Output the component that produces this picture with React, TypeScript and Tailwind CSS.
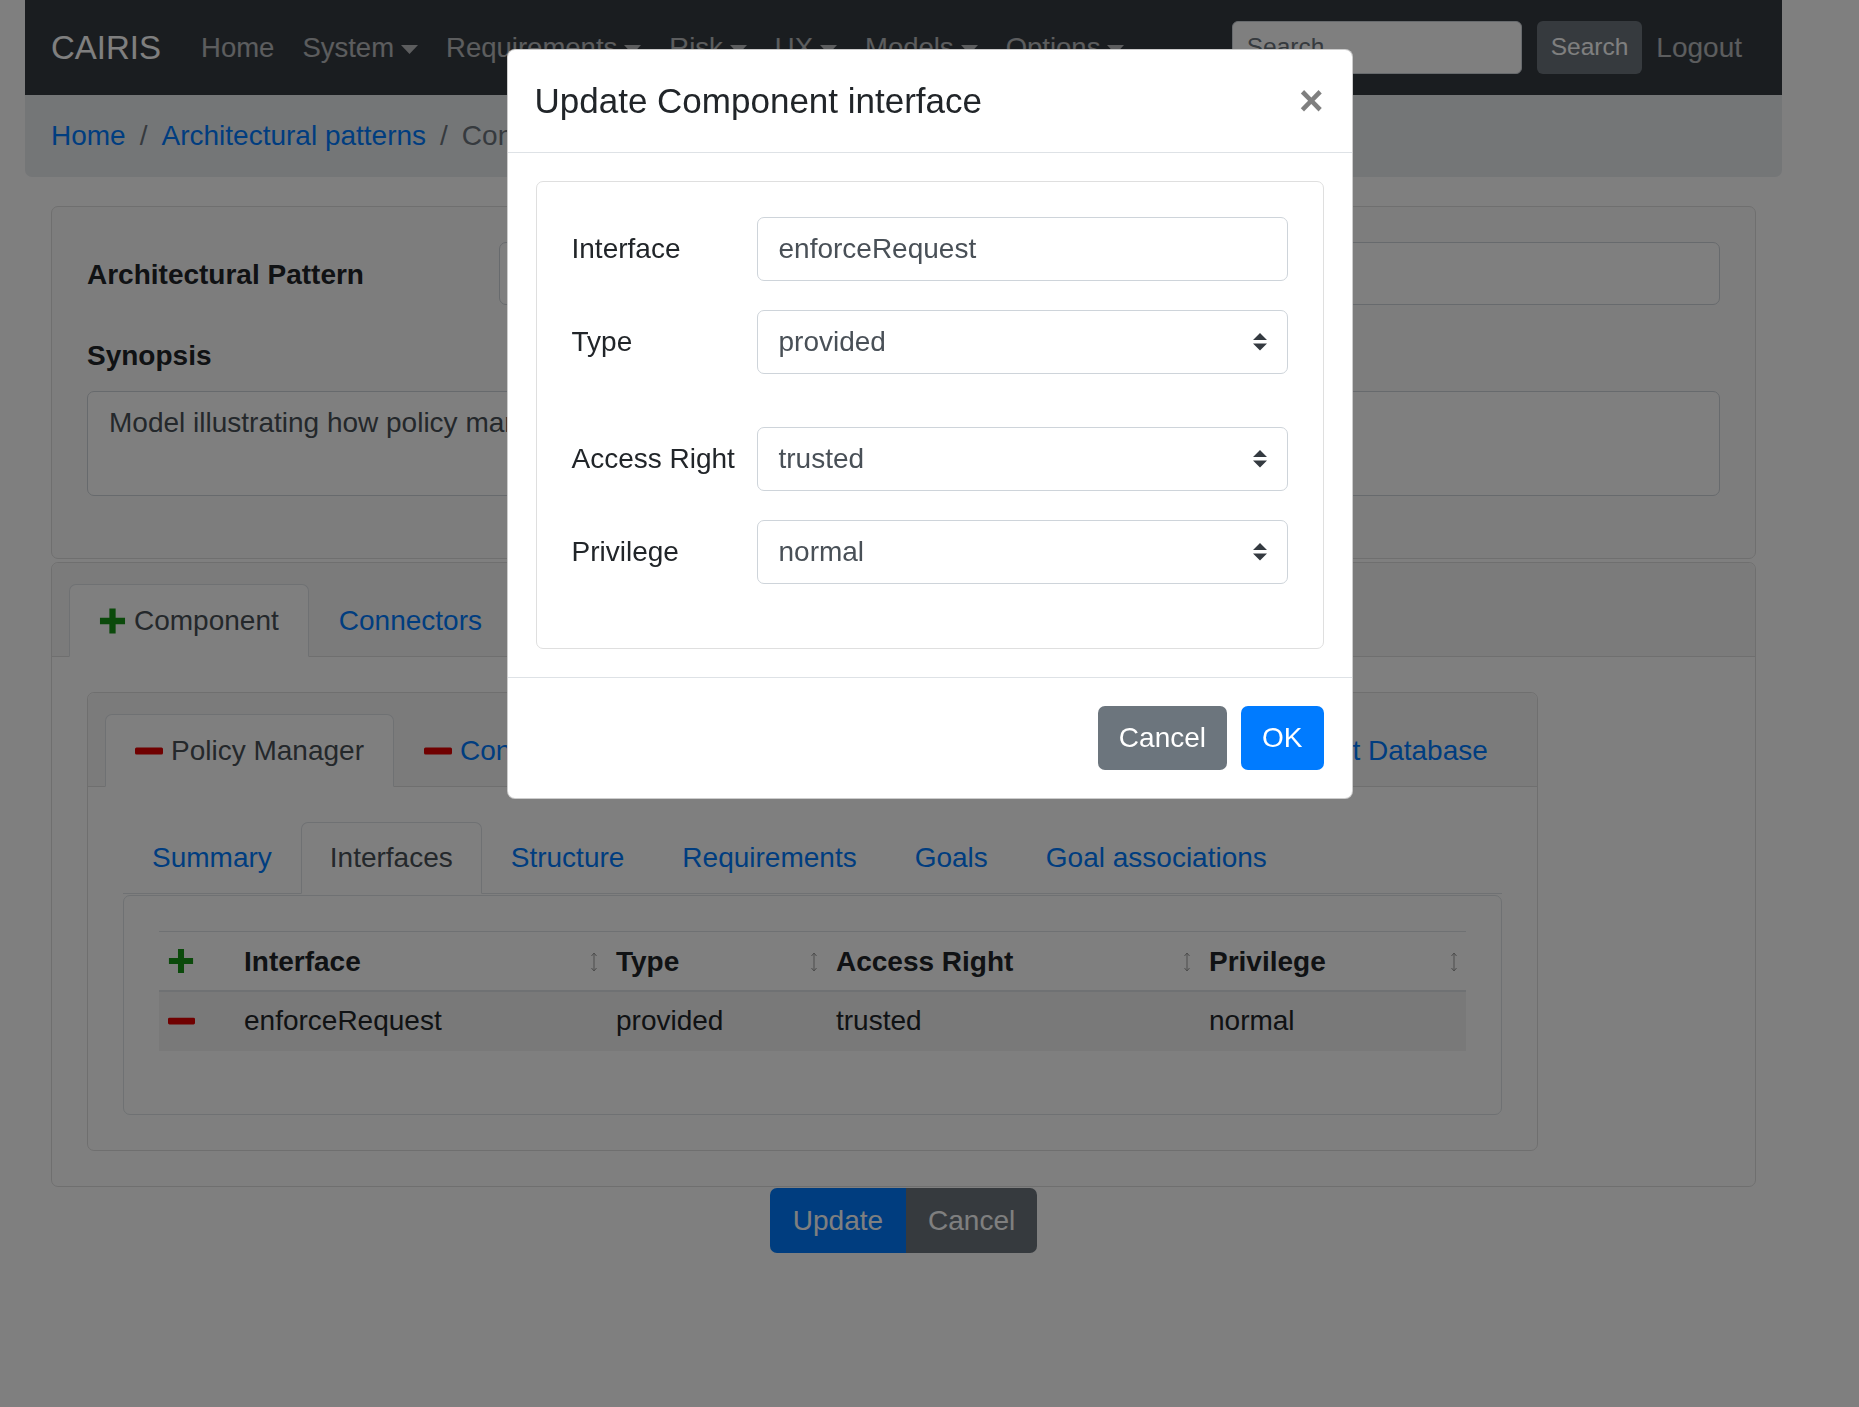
import React from 'react';

function Plus({ className }: { className?: string }) {
  return (
    <svg viewBox="0 0 28 28" className={className}>
      <path d="M14 1v26M1 14h26" stroke="currentColor" strokeWidth="6.5" />
    </svg>
  );
}

function Minus({ className }: { className?: string }) {
  return (
    <svg viewBox="0 0 28 8" className={className}>
      <rect x="0" y="0.5" width="28" height="7" rx="1.5" fill="currentColor" />
    </svg>
  );
}

function Caret() {
  return (
    <svg viewBox="0 0 17 9" className="w-[17px] h-[9px] ml-[7px] mt-[3px]">
      <path d="M0 0h17L8.5 9z" fill="currentColor" />
    </svg>
  );
}

function SortIcon() {
  return (
    <svg viewBox="0 0 8 20" className="w-[8px] h-[20px] text-[#9a9a9a]">
      <path d="M4 1v18M1.5 4L4 1l2.5 3M1.5 16L4 19l2.5-3" stroke="currentColor" strokeWidth="1" fill="none" />
    </svg>
  );
}

function SelectArrows() {
  return (
    <svg viewBox="0 0 4 5" className="w-[14px] h-[17.5px] text-[#343a40]">
      <path d="M2 0L0 2h4zm0 5L0 3h4z" fill="currentColor" />
    </svg>
  );
}

function Navbar() {
  const links = [
    { label: 'Home', caret: false },
    { label: 'System', caret: true },
    { label: 'Requirements', caret: true },
    { label: 'Risk', caret: true },
    { label: 'UX', caret: true },
    { label: 'Models', caret: true },
    { label: 'Options', caret: true },
  ];
  return (
    <nav className="h-[95px] bg-[#343a40] flex items-center px-[26px]">
      <span className="text-[33px] text-white mr-[26px]">CAIRIS</span>
      <ul className="flex items-center text-[27.5px] text-white/65">
        {links.map((l) => (
          <li key={l.label} className="px-[14px] flex items-center">
            {l.label}
            {l.caret && <Caret />}
          </li>
        ))}
      </ul>
      <div className="ml-auto flex items-center">
        <div className="w-[290px] h-[53px] bg-white border border-[#ced4da] rounded-[6px] px-[14px] text-[24.5px] text-[#6c757d] flex items-center">
          Search
        </div>
        <button className="ml-[15px] h-[53px] px-[14px] bg-[#6c757d] text-white text-[24.5px] rounded-[6px]">
          Search
        </button>
        <a className="px-[14px] text-white/65">Logout</a>
      </div>
    </nav>
  );
}

function Breadcrumb() {
  return (
    <ol className="h-[82px] bg-[#e9ecef] rounded-b-[7px] flex items-center px-[26px]">
      <li className="text-[#007bff]">Home</li>
      <li className="px-[14px] text-[#6c757d]">/</li>
      <li className="text-[#007bff]">Architectural patterns</li>
      <li className="px-[14px] text-[#6c757d]">/</li>
      <li className="text-[#6c757d]">Context Policy Management</li>
    </ol>
  );
}

function Tab({
  active,
  icon,
  children,
}: {
  active?: boolean;
  icon?: 'plus' | 'minus';
  children: React.ReactNode;
}) {
  return (
    <div
      className={
        active
          ? 'h-[73px] px-[29px] shrink-0 whitespace-nowrap flex items-center bg-white border border-[#dee2e6] border-b-white rounded-t-[7px] text-[#495057]'
          : 'h-[73px] px-[29px] shrink-0 whitespace-nowrap flex items-center border border-transparent text-[#007bff]'
      }
    >
      {icon === 'plus' && <Plus className="w-[27px] h-[28px] mr-[8px] text-[#179417]" />}
      {icon === 'minus' && <Minus className="w-[28px] h-[8px] mr-[8px] text-[#e00000]" />}
      {children}
    </div>
  );
}

function PatternCard() {
  return (
    <div className="border border-[#dfdfdf] rounded-[7px] bg-[#fbfbfb] p-[35px]">
      <div className="flex items-center mb-[30px]">
        <label className="w-[412px] font-bold pt-[2px]">Architectural Pattern</label>
        <div className="flex-1 h-[63px] bg-white border border-[#ced4da] rounded-[7px] px-[21px] flex items-center text-[#495057]">
          Context Policy Management
        </div>
      </div>
      <label className="block font-bold mb-[14px]">Synopsis</label>
      <div className="h-[105px] bg-white border border-[#ced4da] rounded-[7px] px-[21px] py-[10px] text-[#495057]">
        Model illustrating how policy management works in a context-sensitive system.
      </div>
      <div className="h-[27px]" />
    </div>
  );
}

function InterfacesTable() {
  const cols = 'grid grid-cols-[77px_372px_220px_373px_267px]';
  const heads = ['Interface', 'Type', 'Access Right', 'Privilege'];
  const row = ['enforceRequest', 'provided', 'trusted', 'normal'];
  return (
    <div>
      <div className={`${cols} h-[61px] border-t border-[#dee2e6] border-b-2 items-end pb-[7px]`}>
        <div className="px-[9px] pb-[8px]">
          <Plus className="w-[26px] h-[28px] text-[#179417]" />
        </div>
        {heads.map((h) => (
          <div key={h} className="pl-[8px] pr-[10px] flex items-center justify-between font-bold">
            {h}
            <SortIcon />
          </div>
        ))}
      </div>
      <div className={`${cols} h-[59px] bg-black/5 border-b border-transparent items-center`}>
        <div className="px-[9px]">
          <Minus className="w-[27px] h-[8px] text-[#e00000]" />
        </div>
        {row.map((c) => (
          <div key={c} className="px-[8px]">
            {c}
          </div>
        ))}
      </div>
    </div>
  );
}

function ComponentCard() {
  const inner = ['Summary', 'Interfaces', 'Structure', 'Requirements', 'Goals', 'Goal associations'];
  return (
    <div className="w-[1451px] border border-[#dfdfdf] rounded-[7px] bg-white">
      <div className="bg-[#f7f7f7] border-b border-[#dfdfdf] rounded-t-[7px] px-[17px] pt-[21px]">
        <div className="flex -mb-px">
          <Tab active icon="minus">Policy Manager</Tab>
          <Tab icon="minus">Context Manager</Tab>
          <Tab icon="minus">Authentication Service Manager</Tab>
          <Tab icon="minus">Context Database</Tab>
        </div>
      </div>
      <div className="p-[35px]">
        <div className="flex border-b border-[#dee2e6] h-[72px]">
          {inner.map((t) =>
            t === 'Interfaces' ? (
              <div
                key={t}
                className="h-[72px] px-[28px] flex items-center bg-white border border-[#dee2e6] border-b-white rounded-t-[7px] text-[#495057]"
              >
                {t}
              </div>
            ) : (
              <div key={t} className="h-[72px] px-[29px] flex items-center text-[#007bff]">
                {t}
              </div>
            )
          )}
        </div>
        <div className="mt-[1px] border border-[#dee2e6] rounded-[7px] p-[35px] pb-[63px]">
          <InterfacesTable />
        </div>
      </div>
    </div>
  );
}

function ComponentsCard() {
  return (
    <div className="mt-[3px] border border-[#dfdfdf] rounded-[7px] bg-white">
      <div className="bg-[#f7f7f7] border-b border-[#dfdfdf] rounded-t-[7px] px-[17px] pt-[21px]">
        <div className="flex -mb-px">
          <Tab active icon="plus">Component</Tab>
          <Tab>Connectors</Tab>
        </div>
      </div>
      <div className="p-[35px]">
        <ComponentCard />
      </div>
    </div>
  );
}

function Field({ label, value, select }: { label: string; value: string; select?: boolean }) {
  return (
    <div className="flex items-center mb-[29px]">
      <label className="w-[185px] shrink-0">{label}</label>
      <div className="flex-1 h-[64px] border border-[#ced4da] rounded-[7px] pl-[21px] pr-[20px] flex items-center justify-between text-[#495057]">
        {value}
        {select && <SelectArrows />}
      </div>
    </div>
  );
}

function Modal() {
  return (
    <div className="w-[846px] bg-white rounded-[8px] border border-black/20">
      <div className="h-[103px] flex items-center justify-between pl-[27px] pr-[28px] border-b border-[#dee2e6]">
        <h5 className="text-[35px] text-[#212529]">Update Component interface</h5>
        <span className="text-[42px] font-bold leading-none text-black/50">×</span>
      </div>
      <div className="p-[28px]">
        <div className="border border-[#dfdfdf] rounded-[7px] px-[35px] pt-[35px] pb-[35px]">
          <Field label="Interface" value="enforceRequest" />
          <Field label="Type" value="provided" select />
          <div className="h-[24px]" />
          <Field label="Access Right" value="trusted" select />
          <Field label="Privilege" value="normal" select />
        </div>
      </div>
      <div className="border-t border-[#dee2e6] flex justify-end gap-[14px] p-[28px]">
        <button className="h-[64px] px-[21px] bg-[#6c757d] text-white rounded-[7px]">Cancel</button>
        <button className="h-[64px] px-[21px] bg-[#007bff] text-white rounded-[7px]">OK</button>
      </div>
    </div>
  );
}

export default function App() {
  return (
    <div className="relative min-h-[1407px] bg-white font-['Liberation_Sans',Arial,Helvetica,sans-serif] text-[28px] leading-[1.5] text-[#212529]">
      <div className="pl-[25px] pr-[77px]">
        <Navbar />
        <Breadcrumb />
        <main className="px-[26px] pt-[29px]">
          <PatternCard />
          <ComponentsCard />
          <div className="flex justify-center pt-[1px]">
            <button className="h-[65px] px-[23px] bg-[#007bff] text-white rounded-l-[7px]">Update</button>
            <button className="h-[65px] px-[22px] bg-[#6c757d] text-white rounded-r-[7px]">Cancel</button>
          </div>
        </main>
      </div>
      {/* modal backdrop */}
      <div className="fixed inset-0 bg-black/50" />
      <div className="fixed inset-0 flex justify-center items-start pt-[49px]">
        <Modal />
      </div>
    </div>
  );
}
